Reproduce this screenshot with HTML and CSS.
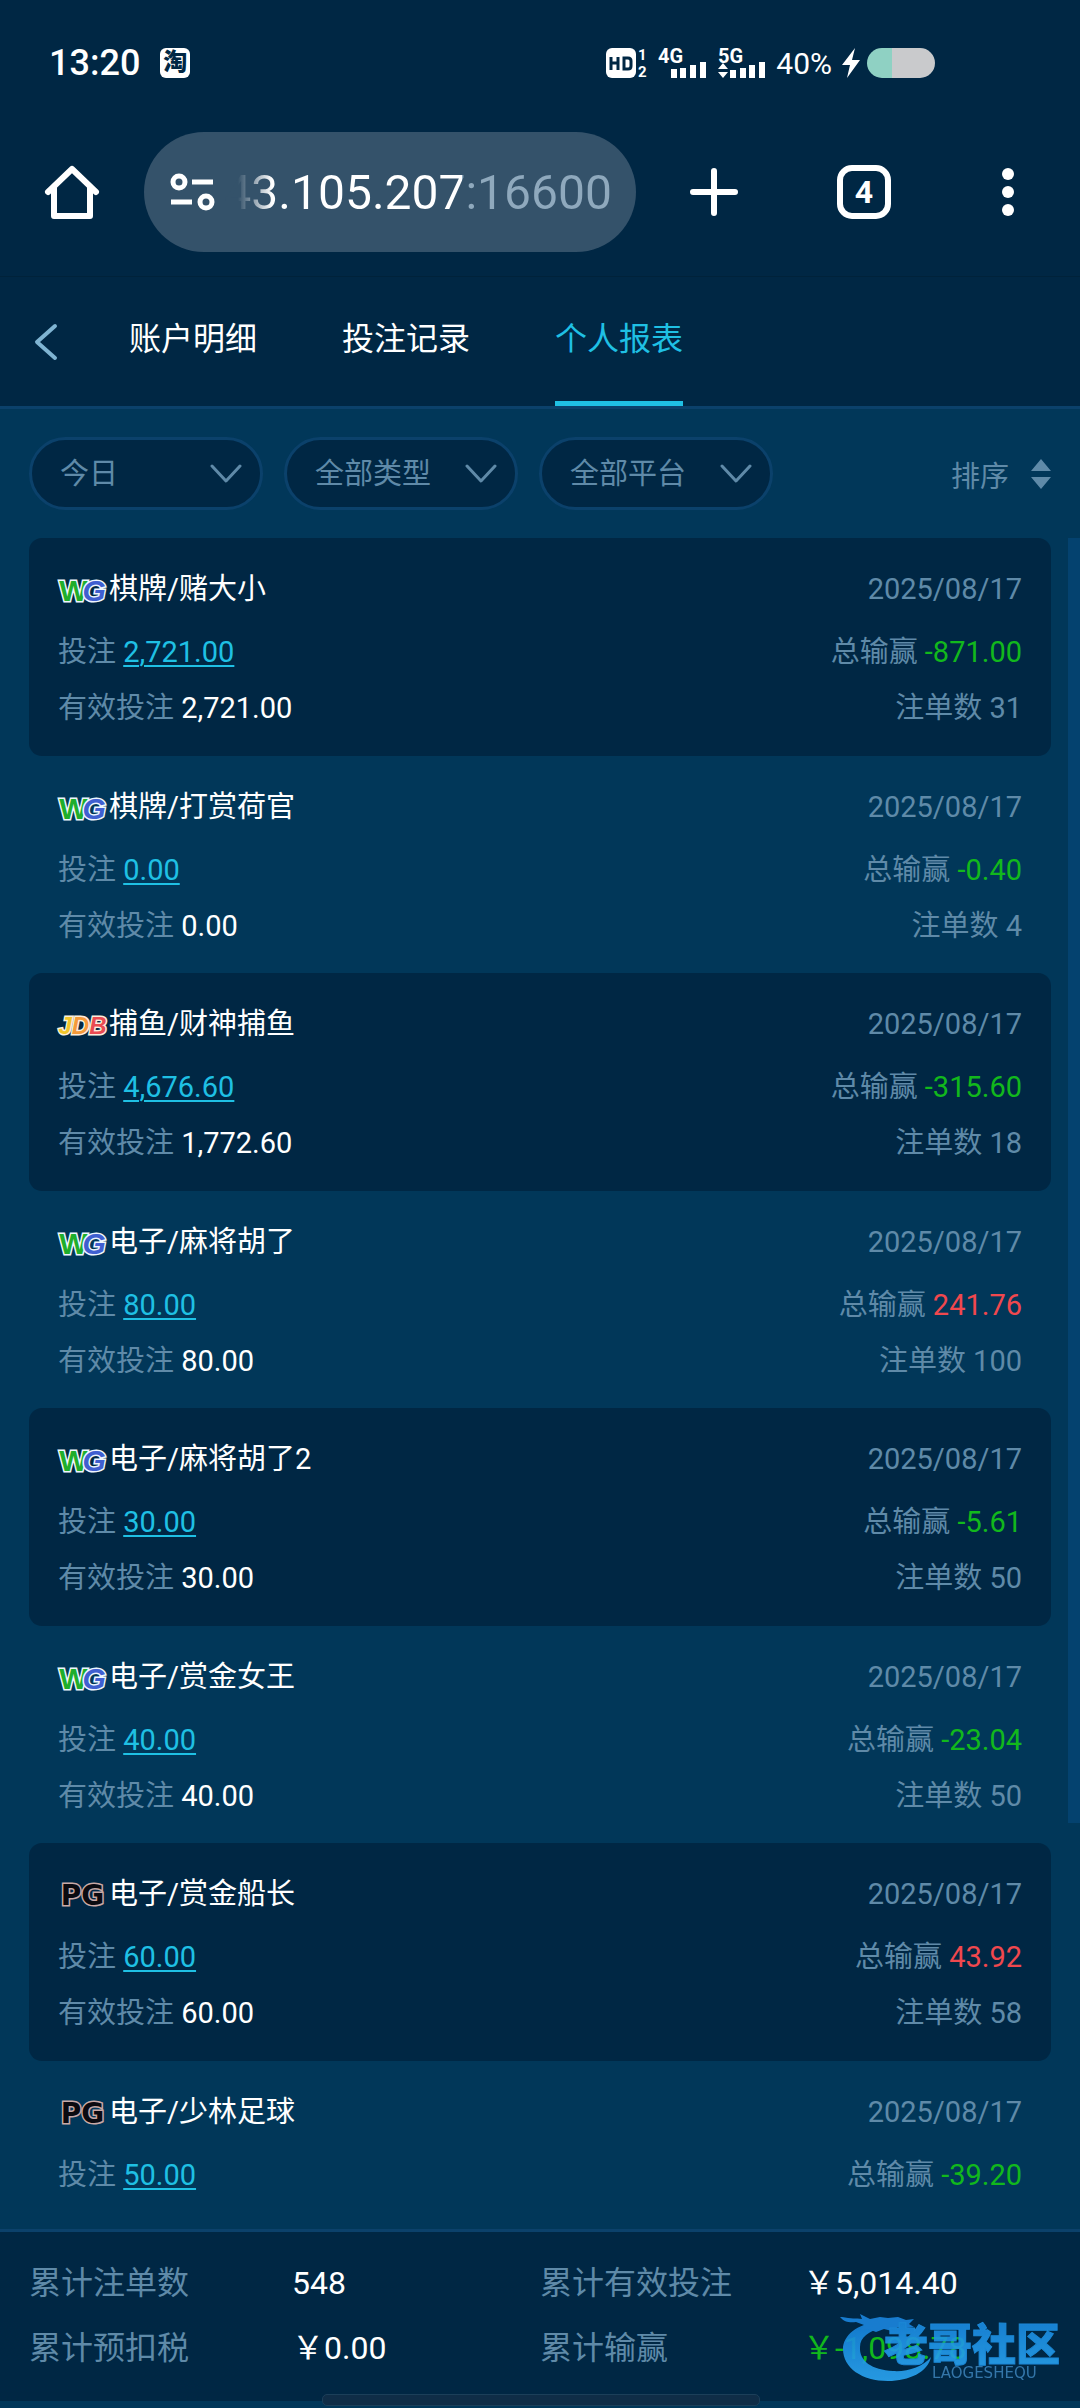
FILE: index.html
```html
<!DOCTYPE html>
<html lang="zh-CN">
  <head>
    <meta charset="UTF-8" />
    <meta name="viewport" content="width=device-width, initial-scale=1.0" />
    <title>个人报表</title>
    <link rel="stylesheet" href="styles.css">
  </head>
  <body>
    <svg class="sprite" aria-hidden="true">
      <defs>
        <linearGradient id="mark-fill" x1="0" y1="0" x2="0" y2="1">
          <stop offset="0" stop-color="#1583dc" />
          <stop offset="1" stop-color="#2ba6f2" />
        </linearGradient>
      </defs>
      <symbol id="chevron" viewBox="0 0 32 20">
        <path d="M2 2l14 15L30 2" fill="none" stroke="currentColor" stroke-width="3" stroke-linecap="round" stroke-linejoin="round" />
      </symbol>
    </svg>

    <div class="status">
      <span class="clock">13:20</span>
      <span class="app-badge">淘</span>
      <div class="signals">
        <svg width="42" height="30" viewBox="0 0 42 30">
          <rect width="30" height="30" rx="6" fill="#fff" />
          <path d="M5 9v13M12 9v13M5 15h7M18 10h4q3 0 3 3v5q0 3-3 3h-4z" fill="none" stroke="#002744" stroke-width="3" />
          <g font-family="Roboto" font-size="15" font-weight="700" fill="#fff">
            <text x="32" y="12">1</text>
            <text x="32" y="29">2</text>
          </g>
        </svg>
        <svg width="50" height="30" viewBox="0 0 50 30">
          <text x="0" y="15" font-family="Roboto" font-size="20" font-weight="700" fill="#fff">4G</text>
          <path d="M13 21h6v9h-6zM22 20h6v10h-6zM32 17h6v13h-6zM42 14h6v16h-6z" fill="#fff" />
        </svg>
        <svg width="48" height="30" viewBox="0 0 48 30">
          <text x="0" y="15" font-family="Roboto" font-size="20" font-weight="700" fill="#fff">5G</text>
          <path d="M5 15l5 6H0zM5 30l5-6H0zM12 22h6v8h-6zM22 20h6v10h-6zM31 17h6v13h-6zM41 14h6v16h-6z" fill="#fff" />
        </svg>
        <span class="percent">40%</span>
        <svg width="18" height="30" viewBox="0 0 18 30">
          <path d="M13 0L0 17h8L5 30l13-18h-8z" fill="#fff" />
        </svg>
        <span class="battery"></span>
      </div>
    </div>

    <div class="toolbar">
      <button class="icon-btn" aria-label="主页">
        <svg width="54" height="54" viewBox="0 0 54 54">
          <path d="M3 27L27 4l24 23M9 23v28h36V23" fill="none" stroke="#fff" stroke-width="6" stroke-linecap="round" stroke-linejoin="round" />
        </svg>
      </button>
      <label class="address">
        <svg width="46" height="40" viewBox="0 0 46 40" fill="none" stroke="#fff" stroke-width="5">
          <circle cx="9" cy="10" r="6" />
          <path d="M22 10h21M1 30h21" />
          <circle cx="36" cy="30" r="6" />
        </svg>
        <input type="text" value="43.105.207:16600" aria-label="网址">
      </label>
      <button class="icon-btn new-tab" aria-label="新标签页">
        <svg width="48" height="48" viewBox="0 0 48 48">
          <path d="M24 3v42M3 24h42" stroke="#fff" stroke-width="6" stroke-linecap="round" />
        </svg>
      </button>
      <button class="tab-count">4</button>
      <button class="icon-btn more" aria-label="更多">
        <svg width="12" height="48" viewBox="0 0 12 48" fill="#fff">
          <circle cx="6" cy="6" r="6" />
          <circle cx="6" cy="24" r="6" />
          <circle cx="6" cy="42" r="6" />
        </svg>
      </button>
    </div>

    <nav class="tabs">
      <button class="icon-btn back" aria-label="返回">
        <svg width="24" height="36" viewBox="0 0 24 36">
          <path d="M21 2L3 18l18 16" fill="none" stroke="#7fb4d2" stroke-width="4" stroke-linecap="round" stroke-linejoin="round" />
        </svg>
      </button>
      <a class="tab" href="#">账户明细</a>
      <a class="tab" href="#">投注记录</a>
      <a class="tab active" href="#">个人报表</a>
    </nav>

    <div class="filters">
      <div class="filter">
        <select aria-label="日期"><option>今日</option></select>
        <svg><use href="#chevron" /></svg>
      </div>
      <div class="filter">
        <select aria-label="类型"><option>全部类型</option></select>
        <svg><use href="#chevron" /></svg>
      </div>
      <div class="filter">
        <select aria-label="平台"><option>全部平台</option></select>
        <svg><use href="#chevron" /></svg>
      </div>
      <button class="sort">
        排序
        <svg width="20" height="30" viewBox="0 0 20 30" fill="currentColor">
          <path d="M10 0l10 12H0zM10 30l10-12H0z" />
        </svg>
      </button>
    </div>

    <main class="records">
      <article class="record">
        <div class="row head"><h2><span class="logo wg">W<i>G</i></span>棋牌/赌大小</h2><time>2025/08/17</time></div>
        <div class="row"><span>投注 <a href="#">2,721.00</a></span><span>总输赢 <b class="down">-871.00</b></span></div>
        <div class="row"><span>有效投注 <b>2,721.00</b></span><span>注单数 31</span></div>
      </article>
      <article class="record">
        <div class="row head"><h2><span class="logo wg">W<i>G</i></span>棋牌/打赏荷官</h2><time>2025/08/17</time></div>
        <div class="row"><span>投注 <a href="#">0.00</a></span><span>总输赢 <b class="down">-0.40</b></span></div>
        <div class="row"><span>有效投注 <b>0.00</b></span><span>注单数 4</span></div>
      </article>
      <article class="record">
        <div class="row head"><h2><span class="logo jdb"><i class="j">J</i>D<i class="b">B</i></span>捕鱼/财神捕鱼</h2><time>2025/08/17</time></div>
        <div class="row"><span>投注 <a href="#">4,676.60</a></span><span>总输赢 <b class="down">-315.60</b></span></div>
        <div class="row"><span>有效投注 <b>1,772.60</b></span><span>注单数 18</span></div>
      </article>
      <article class="record">
        <div class="row head"><h2><span class="logo wg">W<i>G</i></span>电子/麻将胡了</h2><time>2025/08/17</time></div>
        <div class="row"><span>投注 <a href="#">80.00</a></span><span>总输赢 <b class="up">241.76</b></span></div>
        <div class="row"><span>有效投注 <b>80.00</b></span><span>注单数 100</span></div>
      </article>
      <article class="record">
        <div class="row head"><h2><span class="logo wg">W<i>G</i></span>电子/麻将胡了2</h2><time>2025/08/17</time></div>
        <div class="row"><span>投注 <a href="#">30.00</a></span><span>总输赢 <b class="down">-5.61</b></span></div>
        <div class="row"><span>有效投注 <b>30.00</b></span><span>注单数 50</span></div>
      </article>
      <article class="record">
        <div class="row head"><h2><span class="logo wg">W<i>G</i></span>电子/赏金女王</h2><time>2025/08/17</time></div>
        <div class="row"><span>投注 <a href="#">40.00</a></span><span>总输赢 <b class="down">-23.04</b></span></div>
        <div class="row"><span>有效投注 <b>40.00</b></span><span>注单数 50</span></div>
      </article>
      <article class="record">
        <div class="row head"><h2><span class="logo pg">PG</span>电子/赏金船长</h2><time>2025/08/17</time></div>
        <div class="row"><span>投注 <a href="#">60.00</a></span><span>总输赢 <b class="up">43.92</b></span></div>
        <div class="row"><span>有效投注 <b>60.00</b></span><span>注单数 58</span></div>
      </article>
      <article class="record">
        <div class="row head"><h2><span class="logo pg">PG</span>电子/少林足球</h2><time>2025/08/17</time></div>
        <div class="row"><span>投注 <a href="#">50.00</a></span><span>总输赢 <b class="down">-39.20</b></span></div>
      </article>
      <div class="scrollbar"></div>
    </main>

    <footer class="totals">
      <span>累计注单数</span><b>548</b>
      <span>累计有效投注</span><b>￥5,014.40</b>
      <span>累计预扣税</span><b>￥0.00</b>
      <span>累计输赢</span><b class="down">￥-1,098.78</b>
    </footer>
    <div class="home-bar"></div>

    <svg class="watermark" width="228" height="76" viewBox="0 0 228 76">
      <path d="M45 13C24 6 1 20 1 37c0 19 19 32 45 32 21 0 40-9 43-24-8 10-24 15-38 14C30 58 17 49 18 35c0-10 9-16 22-19z" fill="url(#mark-fill)" />
      <path d="M0 5c9 2 14 1 20 2l-2-5 10 5 10-2 8 1 10-1 8 3 8-1-5 5 5 3-8 1 8 3-10-1-6-3-6 4-8-2-8 3-8-3-8 2 4-6-8-3c-6 1-12 0-16-5z" fill="#1b86df" />
      <text x="42" y="49" font-family="Noto Sans CJK SC" font-size="44" font-weight="900" fill="url(#mark-fill)" stroke="#1f93e6">老哥社区</text>
      <text x="90" y="66" font-family="DejaVu Sans" font-size="15" fill="#3a7fb5">LAOGESHEQU</text>
    </svg>
  </body>
</html>
```
FILE: styles.css
```css
* {
  box-sizing: border-box;
}

body {
  font-family: Roboto, "Noto Sans CJK SC", sans-serif;
  margin: 0;
  height: 100vh;
  display: flex;
  flex-direction: column;
  position: relative;
  overflow: hidden;
  background-color: #013759;
  color: #5f8aa8;
  font-size: 29px;
}

button,
input,
select {
  font: inherit;
  color: inherit;
  background: none;
  border: none;
  margin: 0;
  padding: 0;
}

svg {
  display: block;
  flex: none;
  overflow: visible;
}

b {
  font-weight: 400;
  color: #fff;
}

.sprite {
  position: absolute;
  width: 0;
  height: 0;
}

/* phone status bar */
.status {
  display: flex;
  align-items: center;
  height: 126px;
  padding: 0 145px 0 49px;
  background-color: #002744;
  color: #fff;
}

.clock {
  font-size: 36px;
  font-weight: 500;
}

.app-badge {
  width: 30px;
  height: 30px;
  margin-left: 20px;
  border-radius: 6px;
  background-color: #fff;
  color: #002744;
  font-size: 24px;
  font-weight: 900;
  line-height: 28px;
  text-align: center;
}

.signals {
  display: flex;
  align-items: center;
  gap: 10px;
  margin-left: auto;
}

.percent {
  font-size: 30px;
}

.battery {
  width: 68px;
  height: 30px;
  margin-left: -3px;
  border-radius: 15px;
  background: linear-gradient(to right, #8fd1c3 37%, #c9cacc 37%);
}

/* browser toolbar */
.toolbar {
  display: flex;
  align-items: center;
  height: 150px;
  padding: 0 66px 18px 45px;
  background-color: #002744;
  color: #fff;
}

.address {
  display: flex;
  align-items: center;
  flex: 1;
  min-width: 0;
  height: 120px;
  margin-left: 45px;
  padding: 0 24px 0 26px;
  border-radius: 60px;
  background-color: #34526a;
}

.address input {
  flex: 1;
  min-width: 0;
  font-size: 48px;
  text-align: right;
  color: transparent;
  background: linear-gradient(to left, #8fa9bd 150px, #fff 150px, #fff 340px, #34526a 374px);
  background-clip: text;
  -webkit-background-clip: text;
}

.new-tab {
  margin-left: 54px;
}

.tab-count {
  width: 54px;
  height: 54px;
  margin-left: 99px;
  border: 6px solid #fff;
  border-radius: 15px;
  font-size: 32px;
  font-weight: 700;
}

.more {
  margin-left: 111px;
}

/* page tabs */
.tabs {
  display: flex;
  align-items: center;
  height: 133px;
  padding-left: 34px;
  border-top: 1px solid #00223a;
  border-bottom: 3px solid #0b416b;
  background-color: #002744;
}

.back {
  margin-right: 71px;
}

.tab {
  height: 129px;
  margin-right: 85px;
  border-bottom: 5px solid transparent;
  color: #fff;
  font-size: 32px;
  line-height: 124px;
  text-decoration: none;
}

.tab.active {
  color: #1fc0e4;
  border-bottom-color: #1fc0e4;
}

/* filter row */
.filters {
  display: flex;
  align-items: center;
  gap: 21px;
  padding: 28px 29px;
}

.filter {
  position: relative;
  width: 234px;
}

.filter select {
  display: block;
  width: 100%;
  height: 73px;
  padding: 0 60px 0 28px;
  border: 3px solid #0b416b;
  border-radius: 37px;
  background-color: #002744;
  appearance: none;
}

.filter svg {
  position: absolute;
  top: 27px;
  right: 21px;
  width: 32px;
  height: 20px;
  pointer-events: none;
}

.sort {
  display: flex;
  align-items: center;
  gap: 22px;
  margin-left: auto;
}

/* record list */
.records {
  position: relative;
  flex: 1;
  min-height: 0;
  padding: 0 29px;
  overflow: hidden;
}

.record {
  height: 217px;
  padding: 30px 29px 0;
}

.record:nth-child(odd) {
  height: 218px;
  border-radius: 13px;
  background-color: #002744;
}

.row {
  display: flex;
  justify-content: space-between;
  line-height: 56px;
}

.row.head {
  height: 42px;
  margin-bottom: 14px;
  line-height: 42px;
}

.row h2 {
  display: flex;
  gap: 2px;
  margin: 0;
  color: #fff;
  font-size: 29px;
  font-weight: 400;
}

.row a {
  color: #1fc0e4;
  text-decoration-thickness: 2px;
  text-underline-offset: 3px;
}

/* platform logos */
.logo {
  width: 49px;
  font-family: "Liberation Sans", sans-serif;
  font-weight: 700;
  font-size: 30px;
  line-height: 45px;
  text-align: center;
  white-space: nowrap;
  paint-order: stroke;
  -webkit-text-stroke: 3px #eef6ff;
}

.logo.wg {
  color: #1fae2b;
}

.logo.wg i {
  margin-left: -5px;
  color: #3f5fd0;
}

.logo.jdb {
  font-size: 24px;
  font-style: italic;
  color: #f59a3a;
  -webkit-text-stroke-color: #fbeedd;
}

.logo.jdb .j {
  color: #f2c52a;
}

.logo.jdb .b {
  color: #ea4b52;
}

.logo.pg {
  font-family: "DejaVu Sans", sans-serif;
  font-size: 28px;
  color: #0a0a10;
  -webkit-text-stroke-color: #c9a9a6;
}

.row .up {
  color: #f0484e;
}

b.down {
  color: #12b81c;
}

.scrollbar {
  position: absolute;
  top: 0;
  right: 0;
  width: 12px;
  height: 76%;
  background-color: #04426f;
}

/* totals */
.totals {
  display: grid;
  grid-template-columns: 263fr 248fr 263fr 248fr;
  align-content: start;
  height: 172px;
  padding: 19px 29px 0;
  border-top: 3px solid #0b416b;
  background-color: #002744;
  font-size: 32px;
  line-height: 65px;
}

.home-bar {
  height: 7px;
}

.home-bar::after {
  content: "";
  position: absolute;
  left: 50%;
  bottom: 2px;
  width: 436px;
  height: 10px;
  margin-left: -218px;
  border: 1px solid #1b3f59;
  border-radius: 5px;
  background-color: #0f2d47;
}

.watermark {
  position: absolute;
  right: 10px;
  bottom: 20px;
  opacity: 0.9;
}
```
